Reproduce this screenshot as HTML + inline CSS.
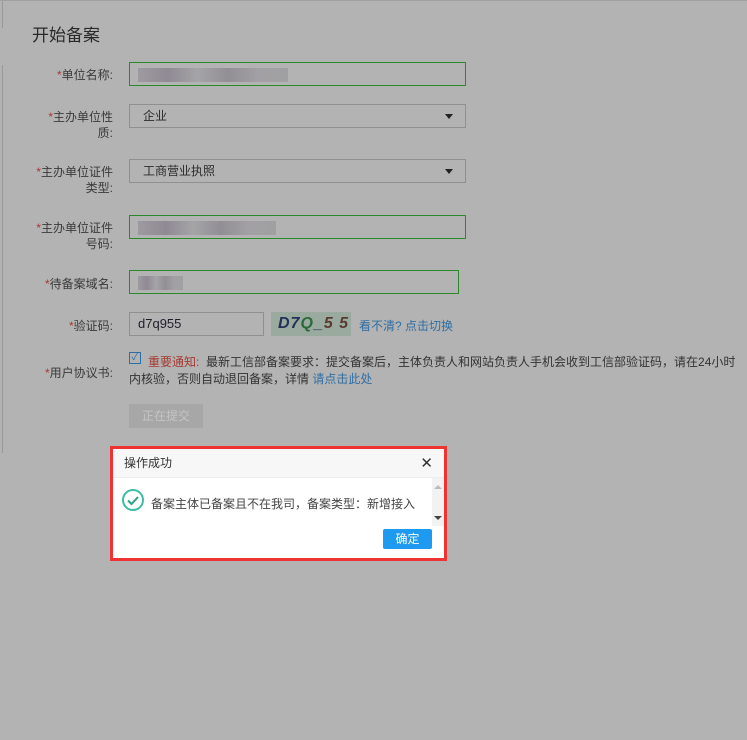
<!DOCTYPE html>
<html><head><meta charset="utf-8"><style>
*{margin:0;padding:0;box-sizing:border-box}
body{width:747px;height:740px;background:#b3b3b3;font-family:"Liberation Sans","Noto Sans CJK SC",sans-serif;font-size:12px;color:#333;position:relative;overflow:hidden}
.a{position:absolute}
.lbl{position:absolute;right:634px;text-align:right;line-height:16px;color:#3a3a3a;font-size:12px;white-space:nowrap}
.lbl i{font-style:normal;color:#a53a32}
.in{position:absolute;left:129px;width:337px;height:24px;border:1px solid #8f8f8f;background:#b3b3b3}
.g{border-color:#2a8a2a}
.blur{position:absolute;top:5px;left:8px;height:14px;background:linear-gradient(90deg,#9a989e,#8c8590 20%,#a3a3a6 40%,#8e8a92 60%,#a09ea2 80%,#9e9ea0);opacity:.9}
.sel{padding-left:13px;line-height:22px;color:#2a2a2a}
.sel:after{content:"";position:absolute;right:12px;top:9px;border:4px solid transparent;border-top:5px solid #222}
</style></head><body>
<div class="a" style="left:2px;top:0;width:1px;height:28px;background:#999"></div>
<div class="a" style="left:2px;top:65px;width:1px;height:388px;background:#999"></div>
<div class="a" style="left:0;top:0;width:747px;height:1px;background:#a0a0a0"></div>
<div class="a" style="left:32px;top:21px;font-size:17px;color:#2a2a2a">开始备案</div>

<div class="lbl" style="top:67px"><i>*</i>单位名称:</div>
<div class="in g" style="top:62px"><div class="blur" style="width:150px"></div></div>

<div class="lbl" style="top:109px"><i>*</i>主办单位性<br>质:</div>
<div class="in sel" style="top:104px">企业</div>

<div class="lbl" style="top:164px"><i>*</i>主办单位证件<br>类型:</div>
<div class="in sel" style="top:159px">工商营业执照</div>

<div class="lbl" style="top:220px"><i>*</i>主办单位证件<br>号码:</div>
<div class="in g" style="top:215px"><div class="blur" style="width:138px"></div></div>

<div class="lbl" style="top:276px"><i>*</i>待备案域名:</div>
<div class="in g" style="top:270px;width:330px"><div class="blur" style="width:45px"></div></div>

<div class="lbl" style="top:318px"><i>*</i>验证码:</div>
<div class="in" style="top:312px;width:135px;padding-left:8px;line-height:22px;color:#1e1e2a;font-size:13px">d7q955</div>
<div class="a" style="left:271px;top:312px;width:80px;height:24px;background:#9aaa9e;font-style:italic;font-size:16px;line-height:24px;padding-left:7px;color:#23305a;font-weight:bold;letter-spacing:1px">D7<span style="color:#2a6a3a">Q</span>_<span style="color:#5a3a30">5 5</span></div>
<div class="a" style="left:359px;top:317px;color:#2f6ea3">看不清? 点击切换</div>

<div class="lbl" style="top:365px"><i>*</i>用户协议书:</div>
<div class="a" style="left:129px;top:352px;width:12px;height:12px;border:1px solid #2f6ea3;color:#2f6ea3;font-size:10px;line-height:10px;text-align:center">✓</div>
<div class="a" style="left:148px;top:354px;width:600px;line-height:17px;color:#333"><span style="color:#a53a32">重要通知:</span>&nbsp; 最新工信部备案要求：提交备案后，主体负责人和网站负责人手机会收到工信部验证码，请在24小时</div>
<div class="a" style="left:129px;top:371px;line-height:17px;color:#333">内核验，否则自动退回备案，详情 <span style="color:#2f6ea3">请点击此处</span></div>
<div class="a" style="left:129px;top:404px;width:74px;height:24px;background:#a7a7a7;color:#c4c4c4;line-height:24px;text-align:center">正在提交</div>

<div class="a" style="left:110px;top:446px;width:337px;height:115px;border:3px solid #ee3333;background:#fff">
 <div style="height:29px;background:#f7f7f7;border-bottom:1px solid #eee;padding-left:11px;line-height:29px;color:#333">操作成功<span style="position:absolute;right:11px;top:0;font-size:15px;color:#333">✕</span></div>
 <div class="a" style="left:9px;top:40px;width:22px;height:22px;border:2px solid #3bbfa4;border-radius:50%"></div>
 <svg class="a" style="left:9px;top:40px" width="22" height="22"><path d="M6 11.5l3.5 3.5 6.5-7" fill="none" stroke="#2aa18a" stroke-width="2"/></svg>
 <div class="a" style="left:38px;top:46px;color:#444">备案主体已备案且不在我司，备案类型：新增接入</div>
 <div class="a" style="left:319px;top:29px;width:12px;height:48px;background:#f2f2f2"></div>
 <div class="a" style="left:321px;top:36px;border:4px solid transparent;border-bottom:4px solid #bbb;border-top:0"></div>
 <div class="a" style="left:321px;top:67px;border:4px solid transparent;border-top:4px solid #444;border-bottom:0"></div>
 <div class="a" style="left:270px;top:80px;width:49px;height:20px;background:#1e9af0;border-radius:2px;color:#fff;text-align:center;line-height:20px">确定</div>
</div>
</body></html>
